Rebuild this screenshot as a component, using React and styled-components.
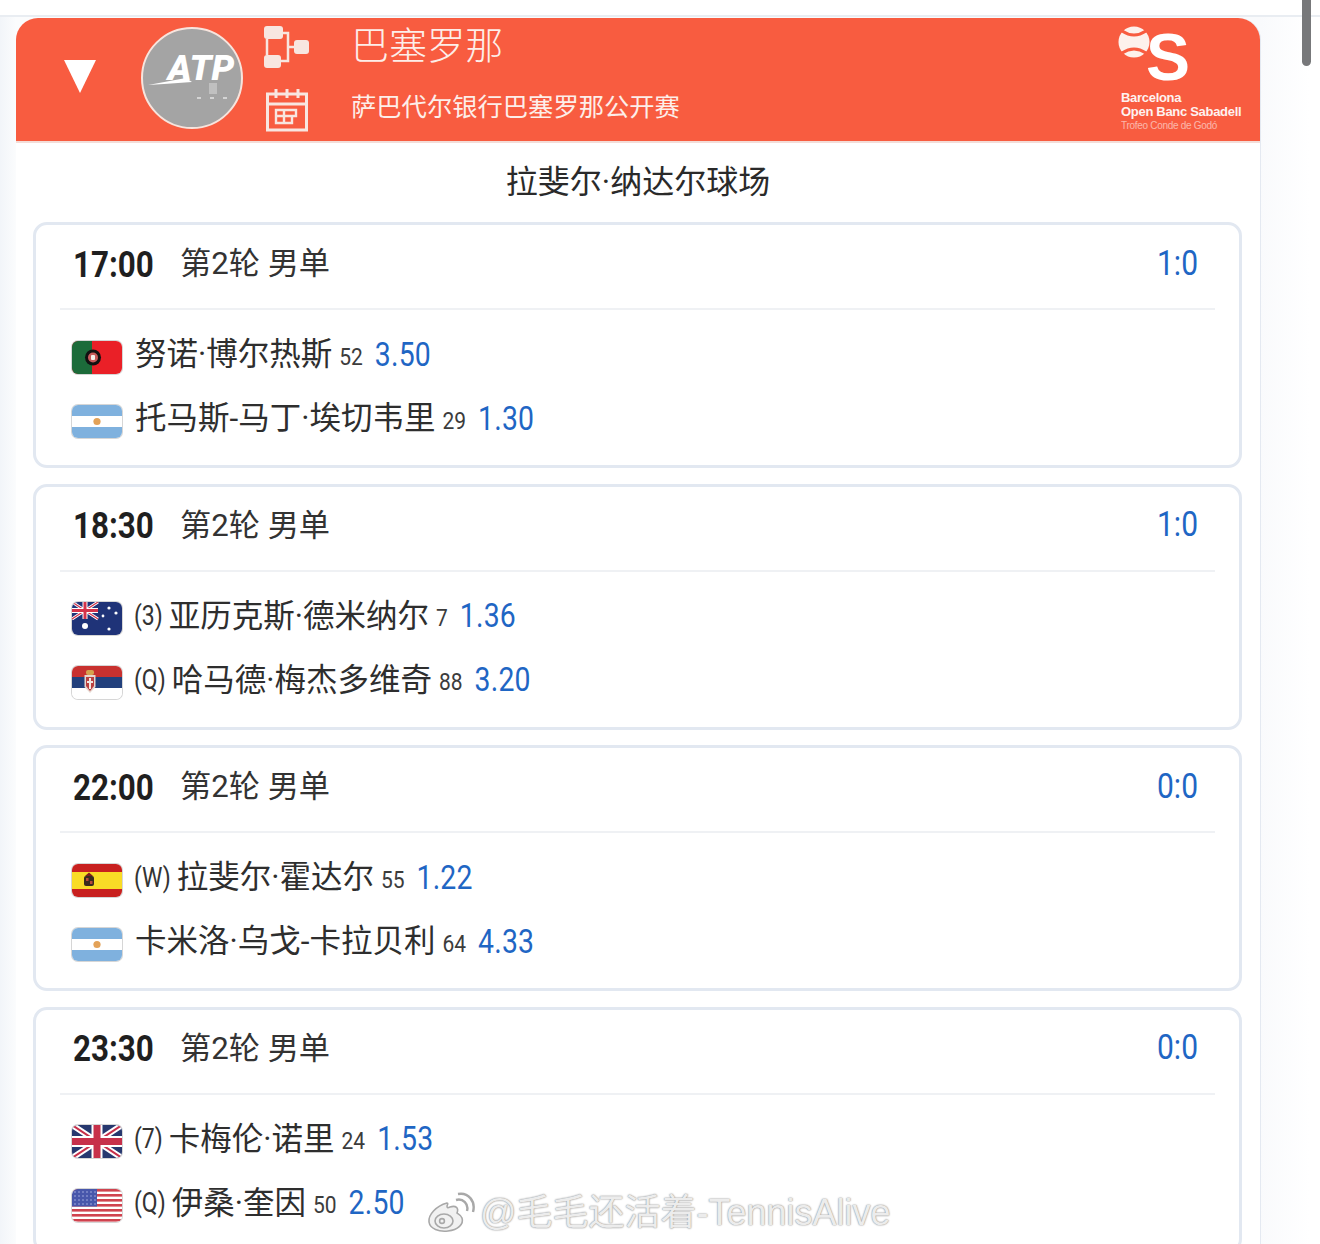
import styled, { createGlobalStyle } from 'styled-components'

const GlobalStyle = createGlobalStyle`
  html, body {
    margin: 0;
    padding: 0;
    background: #fff;
  }
  body {
    font-family: Roboto, "Noto Sans CJK SC", sans-serif;
    color: #222;
  }
`

const Page = styled.div`
  position: relative;
  width: 1320px;
  height: 1244px;
  overflow: hidden;
  background: linear-gradient(90deg, #f2f5f9 0, #fbfcfd 16px, #f9fafc 1260px, #fff 1310px);
`
const TopStrip = styled.div`
  height: 15px;
  background: #fff;
  border-bottom: 2px solid #e9edf2;
  margin-bottom: 1px;
`
const Panel = styled.div`
  width: 1244px;
  margin-left: 16px;
  background: #fff;
  border-radius: 22px 22px 0 0;
  box-shadow: 1px 0 0 #e4e9f1;
`
const Header = styled.div`
  height: 125px;
  box-sizing: border-box;
  background: #f85c40;
  border-radius: 22px 22px 0 0;
  border-bottom: 2px solid #f3ddd8;
  display: flex;
  align-items: center;
  color: #fdeee9;
`
const Arrow = styled.div`
  width: 0;
  height: 0;
  margin: -6px 0 0 48px;
  border-left: 16px solid transparent;
  border-right: 16px solid transparent;
  border-top: 33px solid #fff;
`
const TourBadge = styled.div`
  width: 102px;
  height: 102px;
  box-sizing: border-box;
  margin: -3px 0 0 45px;
  border-radius: 50%;
  border: 2px solid #f7e4dd;
  background: #a4a4a4;
  display: flex;
  align-items: center;
  justify-content: center;
  position: relative;
`
const TourName = styled.span`
  font-size: 36px;
  font-weight: 900;
  font-style: italic;
  color: #fff;
  margin: -18px 0 0 18px;
  display: inline-block;
  transform: scaleY(0.95);
`
const Swoosh = styled.svg`
  position: absolute;
  left: 5px;
  top: 48px;
`
const TourDots = styled.svg`
  position: absolute;
  left: 52px;
  top: 54px;
`
const IconColumn = styled.div`
  width: 48px;
  margin: -2px 0 0 20px;
  display: flex;
  flex-direction: column;
  gap: 19px;
  align-items: flex-start;
`
const IconShift = styled.div`
  display: flex;
  margin-left: ${(p) => p.$left || 0}px;
`
const Titles = styled.div`
  margin-left: 40px;
  flex: 1;
  display: flex;
  flex-direction: column;
  gap: 17px;
  margin-top: -14px;
`
const CityName = styled.div`
  font-size: 38px;
  line-height: 54px;
  font-weight: 300;
  letter-spacing: 0.1px;
`
const EventName = styled.div`
  font-size: 25.3px;
  line-height: 36px;
  font-weight: 400;
`
const Brand = styled.div`
  width: 143px;
  align-self: flex-start;
  margin-top: 7px;
  display: flex;
  flex-direction: column;
  font-family: "Liberation Sans", sans-serif;
  color: #fff;
`
const BrandMark = styled.div`
  height: 66px;
  display: flex;
  align-items: flex-start;
`
const BrandLetter = styled.span`
  font-size: 66px;
  line-height: 66px;
  font-weight: 700;
  margin: -1px 0 0 -5px;
`
const BrandLine = styled.div`
  font-size: ${(p) => (p.$small ? 10 : 13)}px;
  line-height: 14px;
  font-weight: ${(p) => (p.$small ? 400 : 700)};
  letter-spacing: -0.3px;
  margin-left: 4px;
  white-space: nowrap;
  opacity: ${(p) => (p.$small ? 0.55 : 0.92)};
`

const Venue = styled.div`
  height: 79px;
  box-sizing: border-box;
  padding-top: 17px;
  text-align: center;
  font-size: 32px;
  line-height: 44px;
  color: #2a2a2a;
`
const CardList = styled.div`
  padding: 0 18px 0 17px;
  display: flex;
  flex-direction: column;
  gap: 15.6px;
`
const Card = styled.div`
  height: 246px;
  box-sizing: border-box;
  border: 3px solid #e2e8f1;
  border-radius: 14px;
  background: #fff;
  padding: 0 24px;
  flex-shrink: 0;
`
const CardHead = styled.div`
  height: 85px;
  box-sizing: border-box;
  border-bottom: 2px solid #eff1f4;
  padding: 0 17px 5px 13px;
  display: flex;
  align-items: center;
`
const Time = styled.span`
  width: 107px;
  font-size: 31.4px;
  font-weight: 700;
  color: #1f1f1f;
  display: inline-block;
  transform: scaleY(1.16);
`
const Round = styled.span`
  flex: 1;
  font-size: 31.2px;
  line-height: 40px;
  color: #333;
`
const Score = styled.span`
  font-size: 30px;
  color: #1f66c4;
  display: inline-block;
  transform: scaleY(1.16);
  margin-top: -4px;
`
const PlayerList = styled.div`
  padding: 13px 0 0 12px;
`
const PlayerRow = styled.div`
  height: 64px;
  display: flex;
  align-items: center;
  white-space: nowrap;
`
const Flag = styled.svg`
  width: 50px;
  height: 33px;
  flex-shrink: 0;
  border-radius: 6px;
  margin-right: 13px;
  margin-top: 4px;
  box-shadow: 0 0 0 1px rgba(90, 90, 90, 0.25);
`
const Seed = styled.span`
  font-size: 23px;
  color: #333;
  margin-left: -1px;
  margin-right: 6px;
  display: inline-block;
  transform: scaleY(1.18);
`
const Name = styled.span`
  font-size: 31.5px;
  line-height: 40px;
  color: #2e2e2e;
`
const Rank = styled.span`
  font-size: 21px;
  color: #3c3c3c;
  margin-left: 7px;
  margin-top: 3px;
  display: inline-block;
  transform: scaleY(1.14);
`
const Odds = styled.span`
  font-size: 28.4px;
  color: #1f66c4;
  margin-left: 12px;
  letter-spacing: 0.2px;
  display: inline-block;
  transform: scaleY(1.14);
`

const Watermark = styled.div`
  position: absolute;
  left: 426px;
  top: 1191px;
  display: flex;
  align-items: center;
  gap: 4px;
  font-family: "Liberation Sans", "Noto Sans CJK SC", sans-serif;
  font-size: 36px;
  line-height: 44px;
  white-space: nowrap;
  color: #ececec;
  text-shadow: 0 0 2px #8f8f8f, 0 0 1px #a8a8a8, 0 0 5px #fff;
`
const Scrollbar = styled.div`
  position: absolute;
  right: 9px;
  top: 0;
  width: 9px;
  height: 66px;
  background: #77787a;
  border-radius: 0 0 5px 5px;
`

const Portugal = () => (
  <Flag viewBox="0 0 50 33">
    <rect width="50" height="33" fill="#ea2027" />
    <rect width="20" height="33" fill="#1c6b3a" />
    <circle cx="21" cy="16.5" r="8" fill="#111" />
    <circle cx="21" cy="16.5" r="5" fill="#c65a5a" />
    <rect x="19" y="14" width="4" height="5" rx="1" fill="#f4f0ec" />
  </Flag>
)
const Argentina = () => (
  <Flag viewBox="0 0 50 33">
    <rect width="50" height="33" fill="#7fb1de" />
    <rect y="11" width="50" height="11" fill="#fff" />
    <circle cx="25" cy="16.5" r="3.6" fill="#e3a258" />
  </Flag>
)
const Australia = () => (
  <Flag viewBox="0 0 50 33">
    <rect width="50" height="33" fill="#1f3378" />
    <g stroke="#fff" strokeWidth="3">
      <path d="M0 0 L26 17 M26 0 L0 17" />
    </g>
    <g stroke="#d4334a" strokeWidth="1.2">
      <path d="M0 0 L26 17 M26 0 L0 17" />
    </g>
    <path d="M13 0 V17 M0 8.5 H26" stroke="#fff" strokeWidth="5" />
    <path d="M13 0 V17 M0 8.5 H26" stroke="#d4334a" strokeWidth="3" />
    <g fill="#fff">
      <circle cx="13" cy="24" r="3" />
      <circle cx="37" cy="6" r="1.6" />
      <circle cx="31" cy="14" r="1.4" />
      <circle cx="44" cy="11" r="1.6" />
      <circle cx="37" cy="27" r="1.6" />
    </g>
  </Flag>
)
const Serbia = () => (
  <Flag viewBox="0 0 50 33">
    <rect width="50" height="33" fill="#fff" />
    <rect width="50" height="11" fill="#c8312f" />
    <rect y="11" width="50" height="11" fill="#22407c" />
    <path d="M12.5 9 H23.5 V21 L18 27 L12.5 21 Z" fill="#e6d6cf" />
    <path d="M14 11 H22 V20 L18 25 L14 20 Z" fill="#b9403f" />
    <rect x="14" y="4" width="8" height="5" rx="2" fill="#d6a24e" />
    <path d="M17 12 H19 V23 H17 Z M15 15 H21 V17 H15 Z" fill="#f1e6e0" />
  </Flag>
)
const Spain = () => (
  <Flag viewBox="0 0 50 33">
    <rect width="50" height="33" fill="#c8201f" />
    <rect y="8" width="50" height="17" fill="#f9dc26" />
    <rect x="12" y="12" width="10" height="10" rx="2" fill="#3a2b1e" />
    <path d="M13 12 L17 8.5 L21 12 Z" fill="#7b1e1e" />
    <rect x="14" y="14" width="2.5" height="3" fill="#b64a3a" />
    <rect x="18" y="17" width="2.5" height="3" fill="#b64a3a" />
  </Flag>
)
const Britain = () => (
  <Flag viewBox="0 0 50 33">
    <rect width="50" height="33" fill="#27386f" />
    <path d="M0 0 L50 33 M50 0 L0 33" stroke="#fff" strokeWidth="6" />
    <path d="M0 0 L50 33 M50 0 L0 33" stroke="#c7304a" strokeWidth="2" />
    <path d="M25 0 V33 M0 16.5 H50" stroke="#fff" strokeWidth="11" />
    <path d="M25 0 V33 M0 16.5 H50" stroke="#c7304a" strokeWidth="7" />
  </Flag>
)
const Usa = () => (
  <Flag viewBox="0 0 50 33">
    <rect width="50" height="33" fill="#fff" />
    {[0, 5, 10, 15, 20, 25, 30].map((y) => (
      <rect key={y} y={y} width="50" height="2.6" fill="#d0434f" />
    ))}
    <rect width="25" height="17.5" fill="#4857ab" />
    {[3, 7, 11, 15].map((y) =>
      [3, 7, 11, 15, 19, 23].map((x) => (
        <circle key={`${x}-${y}`} cx={x} cy={y} r="0.8" fill="#a9b2e2" />
      ))
    )}
  </Flag>
)

const BracketIcon = () => (
  <svg width="48" height="44" viewBox="0 0 48 44">
    <g fill="#f8e6e0">
      <rect x="1" y="1" width="19" height="13" rx="3" />
      <rect x="1" y="30" width="17" height="13" rx="3" />
      <rect x="31" y="15" width="15" height="14" rx="3" />
    </g>
    <path d="M4 14 V30 M20 8 H25 V36 H18 M25 22 H31" fill="none" stroke="#f8e6e0" strokeWidth="2.5" />
  </svg>
)
const CalendarIcon = () => (
  <svg width="44" height="44" viewBox="0 0 44 44" fill="none" stroke="#f8e6e0" strokeWidth="3">
    <rect x="2.5" y="6" width="39" height="36" />
    <path d="M2.5 16 H41.5 M11 1 V10 M22 1 V10 M33 1 V10" />
    <path d="M11 22 H31 V28 H27 V35 H11 Z M11 28 H27 M19 22 V35" strokeWidth="2.4" />
  </svg>
)
const BallIcon = () => (
  <svg width="34" height="34" viewBox="0 0 34 34">
    <circle cx="17" cy="17" r="15.5" fill="#fdf1ec" />
    <path d="M5 6 Q17 14 29 6 M5 28 Q17 20 29 28" fill="none" stroke="#f85c40" strokeWidth="3" />
  </svg>
)
const WeiboIcon = () => (
  <svg width="50" height="44" viewBox="0 0 50 44" fill="none" stroke="#a8a8a8" strokeWidth="1.6">
    <path d="M21 12 C10 15 2 24 3 31 C4 38 13 41 22 40 C32 39 38 33 36 27 C35 24 32 23 31 22 C33 17 30 14 24 16 C22 17 21 17 21 15 C22 13 22 12 21 12 Z" fill="#f1f1f1" />
    <ellipse cx="18" cy="30" rx="9" ry="7" />
    <circle cx="16" cy="30" r="2.4" />
    <path d="M30 9 C37 7 43 13 41 20 M32 3 C42 1 50 10 47 21" strokeWidth="2.4" />
  </svg>
)

const matches = [
  {
    time: '17:00',
    score: '1:0',
    players: [
      { Flag: Portugal, name: '努诺·博尔热斯', rank: 52, odds: '3.50' },
      { Flag: Argentina, name: '托马斯-马丁·埃切韦里', rank: 29, odds: '1.30' },
    ],
  },
  {
    time: '18:30',
    score: '1:0',
    players: [
      { Flag: Australia, seed: '(3)', name: '亚历克斯·德米纳尔', rank: 7, odds: '1.36' },
      { Flag: Serbia, seed: '(Q)', name: '哈马德·梅杰多维奇', rank: 88, odds: '3.20' },
    ],
  },
  {
    time: '22:00',
    score: '0:0',
    players: [
      { Flag: Spain, seed: '(W)', name: '拉斐尔·霍达尔', rank: 55, odds: '1.22' },
      { Flag: Argentina, name: '卡米洛·乌戈-卡拉贝利', rank: 64, odds: '4.33' },
    ],
  },
  {
    time: '23:30',
    score: '0:0',
    players: [
      { Flag: Britain, seed: '(7)', name: '卡梅伦·诺里', rank: 24, odds: '1.53' },
      { Flag: Usa, seed: '(Q)', name: '伊桑·奎因', rank: 50, odds: '2.50' },
    ],
  },
]

function App() {
  return (
    <Page>
      <GlobalStyle />
      <TopStrip />
      <Panel>
        <Header>
          <Arrow />
          <TourBadge>
            <TourName>ATP</TourName>
            <Swoosh width="44" height="10" viewBox="0 0 44 10">
              <path d="M0 8 L38 1 L44 5 L16 7 Z" fill="#fff" />
            </Swoosh>
            <TourDots width="34" height="18" viewBox="0 0 34 18">
              <rect x="14" y="0" width="8" height="11" fill="#c0c0c0" />
              <g fill="#d4d4d4">
                <rect x="2" y="14" width="4" height="2" />
                <rect x="15" y="14" width="4" height="2" />
                <rect x="28" y="14" width="4" height="2" />
              </g>
            </TourDots>
          </TourBadge>
          <IconColumn>
            <BracketIcon />
            <IconShift $left={2}>
              <CalendarIcon />
            </IconShift>
          </IconColumn>
          <Titles>
            <CityName>巴塞罗那</CityName>
            <EventName>萨巴代尔银行巴塞罗那公开赛</EventName>
          </Titles>
          <Brand>
            <BrandMark>
              <BallIcon />
              <BrandLetter>S</BrandLetter>
            </BrandMark>
            <BrandLine>Barcelona</BrandLine>
            <BrandLine>Open Banc Sabadell</BrandLine>
            <BrandLine $small>Trofeo Conde de Godó</BrandLine>
          </Brand>
        </Header>
        <Venue>拉斐尔·纳达尔球场</Venue>
        <CardList>
          {matches.map((match) => (
            <Card key={match.time}>
              <CardHead>
                <Time>{match.time}</Time>
                <Round>第2轮 男单</Round>
                <Score>{match.score}</Score>
              </CardHead>
              <PlayerList>
                {match.players.map((player) => (
                  <PlayerRow key={player.name}>
                    <player.Flag />
                    {player.seed && <Seed>{player.seed}</Seed>}
                    <Name>{player.name}</Name>
                    <Rank>{player.rank}</Rank>
                    <Odds>{player.odds}</Odds>
                  </PlayerRow>
                ))}
              </PlayerList>
            </Card>
          ))}
        </CardList>
      </Panel>
      <Watermark>
        <WeiboIcon />
        <span>@毛毛还活着-TennisAlive</span>
      </Watermark>
      <Scrollbar />
    </Page>
  )
}

export default App
